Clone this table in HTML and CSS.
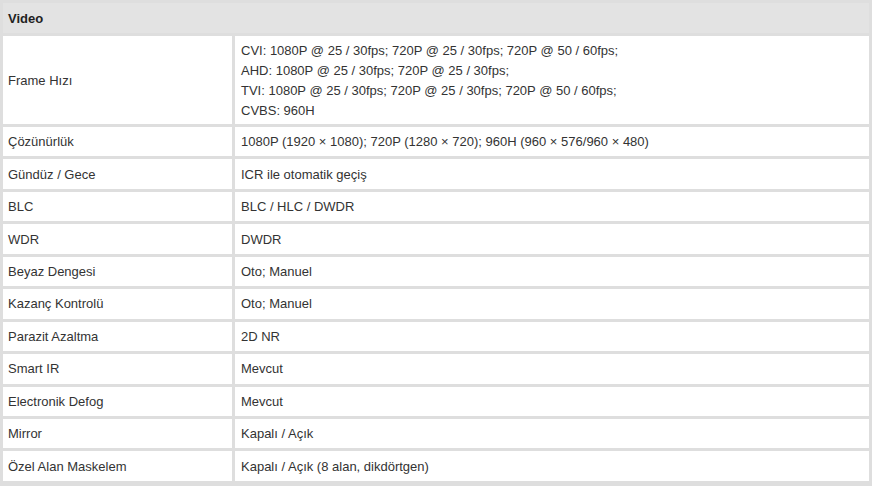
FILE: index.html
```html
<!DOCTYPE html>
<html lang="tr">
<head>
<meta charset="utf-8">
<title>Video</title>
<link rel="stylesheet" href="styles.css">
</head>
<body>
<div class="spec">
  <div class="head">Video</div>
  <div class="k">Frame Hızı</div>
  <div class="v">CVI: 1080P @ 25 / 30fps; 720P @ 25 / 30fps; 720P @ 50 / 60fps;<br>AHD: 1080P @ 25 / 30fps; 720P @ 25 / 30fps;<br>TVI: 1080P @ 25 / 30fps; 720P @ 25 / 30fps; 720P @ 50 / 60fps;<br>CVBS: 960H</div>
  <div class="k">Çözünürlük</div>
  <div class="v">1080P (1920 × 1080); 720P (1280 × 720); 960H (960 × 576/960 × 480)</div>
  <div class="k">Gündüz / Gece</div>
  <div class="v">ICR ile otomatik geçiş</div>
  <div class="k">BLC</div>
  <div class="v">BLC / HLC / DWDR</div>
  <div class="k">WDR</div>
  <div class="v">DWDR</div>
  <div class="k">Beyaz Dengesi</div>
  <div class="v">Oto; Manuel</div>
  <div class="k">Kazanç Kontrolü</div>
  <div class="v">Oto; Manuel</div>
  <div class="k">Parazit Azaltma</div>
  <div class="v">2D NR</div>
  <div class="k">Smart IR</div>
  <div class="v">Mevcut</div>
  <div class="k">Electronik Defog</div>
  <div class="v">Mevcut</div>
  <div class="k">Mirror</div>
  <div class="v">Kapalı / Açık</div>
  <div class="k">Özel Alan Maskelem</div>
  <div class="v">Kapalı / Açık (8 alan, dikdörtgen)</div>
</div>
</body>
</html>
```
FILE: styles.css
```css
html, body {
  margin: 0;
  padding: 0;
  background: #dedede;
}
body {
  font-family: "Liberation Sans", Arial, sans-serif;
  font-size: 13px;
  color: #333333;
}
.spec {
  display: grid;
  grid-template-columns: 229px 634px;
  grid-template-rows: 30px 88px repeat(11, 29.45px);
  gap: 3px;
  padding: 3px;
  background: #dedede;
}
.head {
  grid-column: 1 / 3;
  background: #e3e3e3;
  font-weight: bold;
  display: flex;
  align-items: center;
  padding: 0 5px;
  color: #222222;
}
.k, .v {
  background: #ffffff;
  display: flex;
  flex-direction: column;
  justify-content: center;
  padding: 1px 5px 0;
  line-height: 20px;
}
.v {
  padding-left: 6px;
}
```
